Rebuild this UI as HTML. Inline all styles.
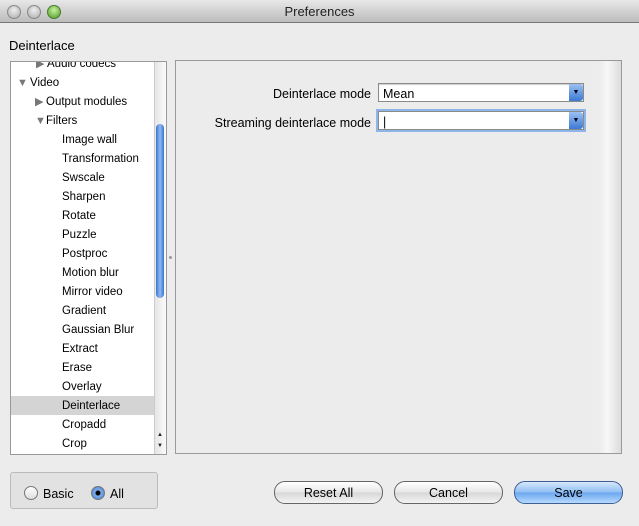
<!DOCTYPE html>
<html><head><style>
body{margin:0;width:639px;height:526px;background:#ececec;font-family:"Liberation Sans",sans-serif;font-size:12px;color:#000;position:relative;overflow:hidden}
.abs{position:absolute}
#title{left:0;top:0;width:639px;height:22px;background:linear-gradient(#e8e8e8,#bcbcbc);border-bottom:1px solid #777;text-align:center;line-height:23px;font-size:13px;color:#222}
.dot{width:12px;height:12px;border-radius:50%;top:5px;background:radial-gradient(circle at 50% 35%,#eee,#aaa);border:1px solid #888}
#tree{left:10px;top:61px;width:155px;height:392px;background:#fff;border:1px solid #999;overflow:hidden}
.row{position:absolute;left:0;width:144px;height:19px;line-height:21px;font-size:11.5px}
.tri{position:absolute;font-size:11px;color:#777}
#sb{position:absolute;right:0;top:0;width:11px;height:392px;background:linear-gradient(90deg,#e6e6e6,#fafafa);border-left:1px solid #ccc}
#thumb{position:absolute;left:1px;top:62px;width:8px;height:174px;border-radius:4px;background:linear-gradient(90deg,#3b74d0,#8fbaf2,#3b74d0)}
#panel{left:175px;top:60px;width:445px;height:392px;border:1px solid #999;background:linear-gradient(90deg,#ececec 95%,#f7f7f7 97%,#dcdcdc)}
.lbl{text-align:right;width:200px;font-size:12.5px}
.combo{width:206px;height:19px;background:#fff;border:1px solid #8a8a8a;box-shadow:inset 0 1px 1px #ccc;font-size:12.5px;line-height:20px;padding-left:4px;box-sizing:border-box}
.arr{position:absolute;right:0;top:0;width:14px;height:17px;background:linear-gradient(#9cc1f2,#3c7ad3);border-radius:0 3px 3px 0;color:#002;font-size:7px;text-align:center;line-height:17px}
.btn{top:481px;width:107px;height:21px;border:1px solid #666;border-radius:11px;background:linear-gradient(#fff,#e6e6e6 50%,#d8d8d8 51%,#f3f3f3);text-align:center;line-height:22px;font-size:12.5px}
#radio{left:10px;top:472px;width:146px;height:35px;border:1px solid #bbb;border-radius:3px;background:#e2e2e2}
.rb{width:12px;height:12px;border-radius:50%;border:1px solid #777;background:linear-gradient(#fff,#ddd)}
</style></head><body>
<div id="title" class="abs">Preferences</div>
<div class="abs dot" style="left:7px"></div>
<div class="abs dot" style="left:27px"></div>
<div class="abs dot" style="left:47px;background:radial-gradient(circle at 50% 35%,#c8f0a0,#4a9a20);border-color:#4a7a30"></div>
<div class="abs" style="left:9px;top:38px;font-size:13px">Deinterlace</div>
<div id="tree" class="abs">
<div class="row" style="top:-8px"><span class="tri" style="left:25px">▶</span><span style="position:absolute;left:36px">Audio codecs</span></div>
<div class="row" style="top:11px"><span class="tri" style="left:6px">▼</span><span style="position:absolute;left:19px">Video</span></div>
<div class="row" style="top:30px"><span class="tri" style="left:24px">▶</span><span style="position:absolute;left:35px">Output modules</span></div>
<div class="row" style="top:49px"><span class="tri" style="left:24px">▼</span><span style="position:absolute;left:35px">Filters</span></div>
<div class="row" style="top:68px;padding-left:51px;box-sizing:border-box">Image wall</div>
<div class="row" style="top:87px;padding-left:51px;box-sizing:border-box">Transformation</div>
<div class="row" style="top:106px;padding-left:51px;box-sizing:border-box">Swscale</div>
<div class="row" style="top:125px;padding-left:51px;box-sizing:border-box">Sharpen</div>
<div class="row" style="top:144px;padding-left:51px;box-sizing:border-box">Rotate</div>
<div class="row" style="top:163px;padding-left:51px;box-sizing:border-box">Puzzle</div>
<div class="row" style="top:182px;padding-left:51px;box-sizing:border-box">Postproc</div>
<div class="row" style="top:201px;padding-left:51px;box-sizing:border-box">Motion blur</div>
<div class="row" style="top:220px;padding-left:51px;box-sizing:border-box">Mirror video</div>
<div class="row" style="top:239px;padding-left:51px;box-sizing:border-box">Gradient</div>
<div class="row" style="top:258px;padding-left:51px;box-sizing:border-box">Gaussian Blur</div>
<div class="row" style="top:277px;padding-left:51px;box-sizing:border-box">Extract</div>
<div class="row" style="top:296px;padding-left:51px;box-sizing:border-box">Erase</div>
<div class="row" style="top:315px;padding-left:51px;box-sizing:border-box">Overlay</div>
<div class="row" style="top:334px;padding-left:51px;box-sizing:border-box;background:#d4d4d4">Deinterlace</div>
<div class="row" style="top:353px;padding-left:51px;box-sizing:border-box">Cropadd</div>
<div class="row" style="top:372px;padding-left:51px;box-sizing:border-box">Crop</div>
<div id="sb"><div id="thumb"></div><div style="position:absolute;top:368px;left:2px;font-size:6px;line-height:11px;color:#222">▲<br>▼</div></div>
</div>
<div class="abs" style="left:169px;top:256px;width:3px;height:3px;border-radius:50%;background:#999"></div>
<div id="panel" class="abs"></div>
<div class="abs lbl" style="left:171px;top:87px">Deinterlace mode</div>
<div class="abs combo" style="left:378px;top:83px">Mean<div class="arr">▼</div></div>
<div class="abs lbl" style="left:171px;top:116px">Streaming deinterlace mode</div>
<div class="abs combo" style="left:378px;top:111px;box-shadow:0 0 0 2px #8fb4e8">|<div class="arr">▼</div></div>
<div id="radio" class="abs"></div>
<div class="abs rb" style="left:24px;top:486px"></div>
<div class="abs" style="left:43px;top:487px;font-size:12.5px">Basic</div>
<div class="abs rb" style="left:91px;top:486px;background:radial-gradient(circle,#000 2px,#7fb0ee 3px,#3a76d0)"></div>
<div class="abs" style="left:110px;top:487px;font-size:12.5px">All</div>
<div class="abs btn" style="left:274px">Reset All</div>
<div class="abs btn" style="left:394px">Cancel</div>
<div class="abs btn" style="left:514px;background:linear-gradient(#d6e8fc,#8ebdf3 50%,#6aa6ee 51%,#b7daff);border-color:#3d5f96">Save</div>
</body></html>
